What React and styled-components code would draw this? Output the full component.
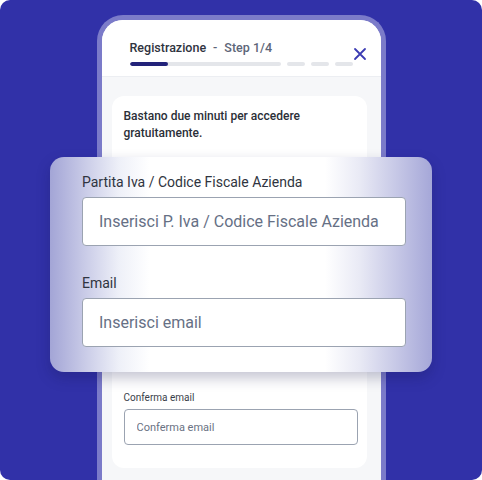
import React from "react"
import styled, { createGlobalStyle } from "styled-components"

const GlobalStyle = createGlobalStyle`
  html, body {
    margin: 0;
    padding: 0;
    background: #ffffff;
  }
  body {
    font-family: "Roboto", "Liberation Sans", sans-serif;
  }
`

const Stage = styled.div`
  position: relative;
  width: 482px;
  height: 480px;
  background: #3131a8;
  border-radius: 10px;
  overflow: hidden;
  display: flex;
  justify-content: center;
  padding-top: 15px;
  box-sizing: border-box;
`

const Phone = styled.div`
  width: 289px;
  height: 480px;
  box-sizing: border-box;
  border: 5px solid #7b7bc9;
  border-bottom: none;
  border-radius: 26px 26px 0 0;
  background: #f6f7f9;
  overflow: hidden;
  display: flex;
  flex-direction: column;
`

const Header = styled.div`
  background: #ffffff;
  height: 57px;
  border-bottom: 1px solid #eceef2;
  padding: 20px 14px 0 28px;
  box-sizing: border-box;
  display: flex;
  align-items: flex-start;
  justify-content: space-between;
`

const HeaderMain = styled.div`
  display: flex;
  flex-direction: column;
  gap: 7px;
`

const Title = styled.div`
  display: flex;
  gap: 7px;
  font-size: 12.5px;
  font-weight: 500;
  color: #2f3440;
  line-height: 15px;
`

const Step = styled.span`
  color: #5d6678;
`

const Progress = styled.div`
  display: flex;
  gap: 6px;
`

const Segment = styled.div`
  height: 4px;
  width: ${(p) => p.$w}px;
  border-radius: 2px;
  background: #e4e6ea;
  overflow: hidden;
  &::before {
    content: "";
    display: block;
    height: 100%;
    width: ${(p) => p.$fill || 0}px;
    background: #23237a;
    border-radius: 2px;
  }
`

const Close = styled.button`
  border: none;
  background: none;
  padding: 0;
  margin-top: 7px;
  width: 14px;
  height: 14px;
  cursor: pointer;
`

const Body = styled.div`
  padding: 19px 14px 0 10px;
`

const Card = styled.div`
  background: #ffffff;
  border-radius: 12px;
  padding: 12px 12px 23px;
  height: 372px;
  box-sizing: border-box;
  display: flex;
  flex-direction: column;
`

const Intro = styled.p`
  margin: 0;
  font-size: 12px;
  font-weight: 500;
  line-height: 17px;
  color: #2b2f38;
`

const Spacer = styled.div`
  flex: 1;
`

const SmallLabel = styled.label`
  display: block;
  font-size: 10px;
  color: #3a3f4a;
  margin-bottom: 6px;
`

const SmallInput = styled.input`
  display: block;
  width: 234px;
  height: 36px;
  box-sizing: border-box;
  border: 1px solid #9ba3b1;
  border-radius: 4px;
  padding: 0 12px;
  font-family: inherit;
  font-size: 11px;
  color: #2b2f38;
  background: #fff;
  &::placeholder {
    color: #6a7283;
  }
`

const Overlay = styled.div`
  position: absolute;
  left: 50px;
  top: 157px;
  width: 382px;
  height: 215px;
  border-radius: 14px;
  box-sizing: border-box;
  padding: 17px 26px 0 32px;
  background: linear-gradient(
    90deg,
    #a3a5d6 0%,
    #eef0f8 18%,
    #ffffff 26%,
    #ffffff 72%,
    #e9eaf5 81%,
    #a5a7d8 100%
  );
  box-shadow: 0 6px 14px rgba(20, 20, 70, 0.25);
  display: flex;
  flex-direction: column;
`

const Field = styled.div`
  display: flex;
  flex-direction: column;
  margin-bottom: ${(p) => p.$gap || 0}px;
`

const BigLabel = styled.label`
  font-size: 14px;
  color: #2f3440;
  line-height: 17px;
  margin-bottom: 6px;
`

const BigInput = styled.input`
  width: 324px;
  height: 49px;
  box-sizing: border-box;
  border: 1px solid #9ba3b1;
  border-radius: 4px;
  padding: 0 16px;
  font-family: inherit;
  font-size: 16px;
  color: #2b2f38;
  background: #fff;
  &::placeholder {
    color: #667085;
  }
`

const CloseIcon = () => (
  <svg width="14" height="14" viewBox="0 0 14 14" fill="none">
    <path d="M2 2 L12 12 M12 2 L2 12" stroke="#3b3bb3" strokeWidth="1.8" strokeLinecap="round" />
  </svg>
)

const App = () => {
  return (
    <>
      <GlobalStyle />
      <Stage>
        <Phone>
          <Header>
            <HeaderMain>
              <Title>
                <span>Registrazione</span>
                <Step>-</Step>
                <Step>Step 1/4</Step>
              </Title>
              <Progress>
                <Segment $w={151} $fill={38} />
                <Segment $w={18} />
                <Segment $w={18} />
                <Segment $w={18} />
              </Progress>
            </HeaderMain>
            <Close aria-label="Chiudi">
              <CloseIcon />
            </Close>
          </Header>
          <Body>
            <Card>
              <Intro>
                Bastano due minuti per accedere
                <br />
                gratuitamente.
              </Intro>
              <Spacer />
              <SmallLabel>Conferma email</SmallLabel>
              <SmallInput placeholder="Conferma email" />
            </Card>
          </Body>
        </Phone>
        <Overlay>
          <Field $gap={29}>
            <BigLabel>Partita Iva / Codice Fiscale Azienda</BigLabel>
            <BigInput placeholder="Inserisci P. Iva / Codice Fiscale Azienda" />
          </Field>
          <Field>
            <BigLabel>Email</BigLabel>
            <BigInput placeholder="Inserisci email" />
          </Field>
        </Overlay>
      </Stage>
    </>
  )
}

export default App
